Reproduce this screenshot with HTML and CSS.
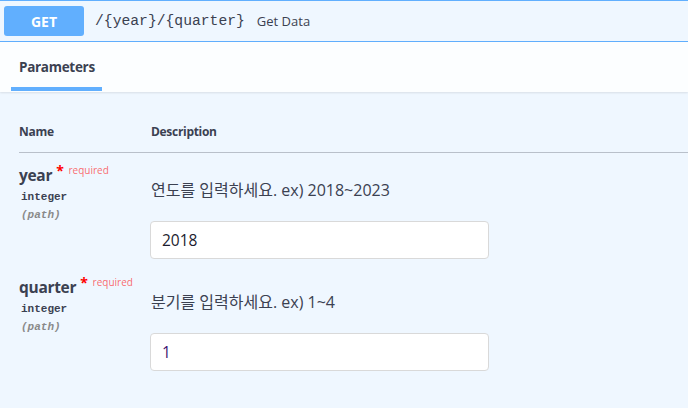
FILE: index.html
```html
<!DOCTYPE html>
<html lang="ko">
<head>
<meta charset="utf-8">
<link rel="stylesheet" href="styles.css">
</head>
<body>
<div class="opblock">
  <div class="summary">
    <span class="method">GET</span>
    <span class="path">/{year}/{quarter}</span>
    <span class="summary-desc">Get Data</span>
  </div>
  <div class="tab-header">
    <div class="tab-item">Parameters</div>
  </div>
  <div class="params">
    <div class="param-head">
      <div class="th">Name</div>
      <div class="th">Description</div>
    </div>
    <div class="param-row">
      <div class="pname-cell">
        <div class="pname">year<span class="star">*</span><span class="req">required</span></div>
        <div class="ptype">integer</div>
        <div class="pin">(path)</div>
      </div>
      <div class="pdesc-cell">
        <div class="pdesc">연도를 입력하세요. ex) 2018~2023</div>
        <input class="pinput" type="text" value="2018">
      </div>
    </div>
    <div class="param-row">
      <div class="pname-cell">
        <div class="pname">quarter<span class="star">*</span><span class="req">required</span></div>
        <div class="ptype">integer</div>
        <div class="pin">(path)</div>
      </div>
      <div class="pdesc-cell">
        <div class="pdesc">분기를 입력하세요. ex) 1~4</div>
        <input class="pinput purple" type="text" value="1">
      </div>
    </div>
  </div>
</div>
</body>
</html>
```

FILE: styles.css
```css
html, body {
  margin: 0;
  padding: 0;
  background: #eff7ff;
}
body {
  font-family: "Open Sans", "Noto Sans CJK KR", sans-serif;
  color: #3b4151;
  width: 688px;
  height: 408px;
  overflow: hidden;
}
.opblock {
  background: #eff7ff;
  border-top: 1px solid #61affe;
}
.summary {
  display: flex;
  align-items: center;
  height: 40px;
  padding: 0 4px;
  border-bottom: 1px solid #61affe;
}
.method {
  width: 80px;
  height: 30px;
  background: #61affe;
  border-radius: 3px;
  color: #fff;
  font-weight: 700;
  font-size: 14px;
  display: flex;
  align-items: center;
  justify-content: center;
}
.path {
  font-family: "Liberation Mono", "DejaVu Sans Mono", monospace;
  font-size: 14.7px;
  color: #3b4151;
  margin-left: 11px;
}
.summary-desc {
  font-size: 13px;
  margin-left: 12px;
  color: #3b4151;
}
.tab-header {
  height: 50px;
  background: rgba(255,255,255,.8);
  box-shadow: 0 1px 2px rgba(0,0,0,.1);
  padding-left: 19px;
  display: flex;
}
.tab-item {
  position: relative;
  display: flex;
  align-items: center;
  font-size: 13.5px;
  letter-spacing: -0.3px;
  font-weight: 700;
  color: #3b4151;
}
.tab-item::after {
  content: "";
  position: absolute;
  left: -8px;
  right: -7px;
  bottom: 1px;
  height: 4px;
  background: #61affe;
}
.params {
  padding: 20px 0 0 19px;
}
.param-head {
  display: grid;
  grid-template-columns: 132px 1fr;
  border-bottom: 1px solid rgba(59,65,81,.3);
}
.th {
  font-size: 12px;
  letter-spacing: -0.3px;
  font-weight: 700;
  line-height: 16px;
  padding: 12px 0;
}
.param-row {
  display: grid;
  grid-template-columns: 131px 1fr;
  padding: 12px 0 6px;
}
.pname {
  font-size: 15.5px;
  letter-spacing: -0.3px;
  font-weight: 700;
  line-height: 20px;
}
.star {
  color: red;
  font-size: 14px;
  margin-left: 4px;
  position: relative;
  top: -5px;
}
.req {
  color: rgba(255,0,0,.6);
  font-size: 10px;
  letter-spacing: 0;
  font-weight: 400;
  margin-left: 5px;
  position: relative;
  top: -7px;
}
.ptype {
  font-family: "Liberation Mono", "DejaVu Sans Mono", monospace;
  font-size: 11px;
  font-weight: 700;
  line-height: 16px;
  padding: 2px 0 2px 2px;
}
.pin {
  font-family: "Liberation Mono", "DejaVu Sans Mono", monospace;
  font-size: 11px;
  font-weight: 700;
  font-style: italic;
  color: #8a8a8a;
  line-height: 16px;
  padding-left: 2px;
}
.pdesc-cell {
  padding-top: 15px;
  padding-left: 1px;
}
.pdesc {
  font-size: 16px;
  line-height: 20px;
}
.pinput {
  display: block;
  box-sizing: border-box;
  width: 339px;
  height: 38px;
  margin-top: 21px;
  margin-left: -1px;
  border: 1px solid #d9d9d9;
  border-radius: 4px;
  background: #fff;
  padding: 0 11px;
  font-family: "Open Sans", "Noto Sans CJK KR", sans-serif;
  font-size: 15.5px;
  color: #1c1c2e;
  outline: none;
}
.pinput.purple {
  color: #3b1070;
}
```
